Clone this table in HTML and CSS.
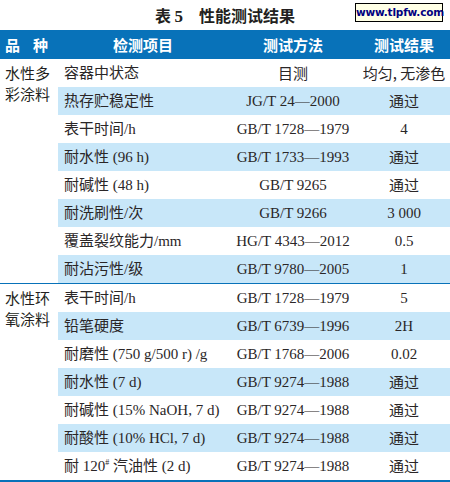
FILE: index.html
```
<!DOCTYPE html>
<html lang="zh-CN">
<head>
    <meta charset="UTF-8">
    <title>性能测试结果</title>
    <link rel="stylesheet" href="styles.css">
</head>
<body>
    <div class="caption">
        <span class="no">表 <b>5</b></span><span>性能测试结果</span>
        <div class="mark">www.tlpfw.com</div>
    </div>
    <table class="result">
        <colgroup>
            <col class="c1"><col class="c2"><col class="c3"><col class="c4">
        </colgroup>
        <tr class="head">
            <th class="kind">品<span class="sp"></span>种</th>
            <th>检测项目</th>
            <th>测试方法</th>
            <th>测试结果</th>
        </tr>
        <tr>
            <td class="kind" rowspan="8">水性多<br>彩涂料</td>
            <td class="item">容器中状态</td>
            <td class="cjk">目测</td>
            <td class="cjk">均匀, 无渗色</td>
        </tr>
        <tr class="alt">
            <td class="item">热存贮稳定性</td>
            <td>JG/T 24—2000</td>
            <td class="cjk">通过</td>
        </tr>
        <tr>
            <td class="item">表干时间/h</td>
            <td>GB/T 1728—1979</td>
            <td>4</td>
        </tr>
        <tr class="alt">
            <td class="item">耐水性 (96 h)</td>
            <td>GB/T 1733—1993</td>
            <td class="cjk">通过</td>
        </tr>
        <tr>
            <td class="item">耐碱性 (48 h)</td>
            <td>GB/T 9265</td>
            <td class="cjk">通过</td>
        </tr>
        <tr class="alt">
            <td class="item">耐洗刷性/次</td>
            <td>GB/T 9266</td>
            <td>3 000</td>
        </tr>
        <tr>
            <td class="item">覆盖裂纹能力/mm</td>
            <td>HG/T 4343—2012</td>
            <td>0.5</td>
        </tr>
        <tr class="alt">
            <td class="item">耐沾污性/级</td>
            <td>GB/T 9780—2005</td>
            <td>1</td>
        </tr>
        <tr class="group">
            <td class="kind" rowspan="7">水性环<br>氧涂料</td>
            <td class="item">表干时间/h</td>
            <td>GB/T 1728—1979</td>
            <td>5</td>
        </tr>
        <tr class="alt">
            <td class="item">铅笔硬度</td>
            <td>GB/T 6739—1996</td>
            <td>2H</td>
        </tr>
        <tr>
            <td class="item">耐磨性 (750 g/500 r) /g</td>
            <td>GB/T 1768—2006</td>
            <td>0.02</td>
        </tr>
        <tr class="alt">
            <td class="item">耐水性 (7 d)</td>
            <td>GB/T 9274—1988</td>
            <td class="cjk">通过</td>
        </tr>
        <tr>
            <td class="item">耐碱性 (15% NaOH, 7 d)</td>
            <td>GB/T 9274—1988</td>
            <td class="cjk">通过</td>
        </tr>
        <tr class="alt">
            <td class="item">耐酸性 (10% HCl, 7 d)</td>
            <td>GB/T 9274—1988</td>
            <td class="cjk">通过</td>
        </tr>
        <tr>
            <td class="item">耐 120<sup>#</sup> 汽油性 (2 d)</td>
            <td>GB/T 9274—1988</td>
            <td class="cjk">通过</td>
        </tr>
    </table>
</body>
</html>
```
FILE: styles.css
```
* {
    margin: 0;
    padding: 0;
}

body {
    width: 450px;
    background: #fff;
    color: #2a2627;
    font-family: "Liberation Serif", "Noto Sans CJK SC", serif;
}

.caption {
    position: relative;
    height: 30px;
    display: flex;
    justify-content: center;
    align-items: center;
    gap: 16px;
    padding-left: 0;
    font-family: "Noto Sans CJK SC", sans-serif;
    font-weight: bold;
    font-size: 16px;
    color: #231f20;
}

.caption b {
    font-family: "Liberation Serif", serif;
    font-size: 17px;
}

.mark {
    position: absolute;
    left: 355px;
    top: 3px;
    width: 86px;
    height: 17px;
    border: 1px solid #000;
    background: #ffffe6;
    color: #000080;
    font-family: "DejaVu Sans", sans-serif;
    font-size: 10.5px;
    font-weight: bold;
    line-height: 17px;
    text-align: center;
    letter-spacing: -0.2px;
}

.result {
    width: 450px;
    border-collapse: collapse;
    table-layout: fixed;
    font-size: 15px;
    border-bottom: 2px solid #0872b9;
}

.c1 { width: 58px; }
.c2 { width: 170px; }
.c3 { width: 130px; }
.c4 { width: 92px; }

.result td,
.result th {
    height: 28px;
    text-align: center;
    vertical-align: middle;
    white-space: nowrap;
    line-height: 20px;
}

.head th {
    height: 29px;
    background: #0872b9;
    color: #fff;
    font-family: "Noto Sans CJK SC", sans-serif;
    font-weight: bold;
    font-size: 15px;
}

.head th.kind {
    text-align: left;
    padding-left: 5px;
}

.sp {
    display: inline-block;
    width: 13px;
}

.result td.kind {
    vertical-align: top;
    text-align: left;
    padding: 3px 0 0 5px;
    line-height: 21px;
    font-family: "Noto Sans CJK SC", sans-serif;
    color: #231f20;
}

.result td.item {
    text-align: left;
    padding-left: 6px;
}

.cjk {
    font-family: "Noto Sans CJK SC", sans-serif;
}

.alt td {
    background: #c8e7f9;
}

.group td {
    border-top: 1px solid #0872b9;
}

sup {
    font-size: 8px;
    vertical-align: 6px;
    line-height: 0;
}
```
